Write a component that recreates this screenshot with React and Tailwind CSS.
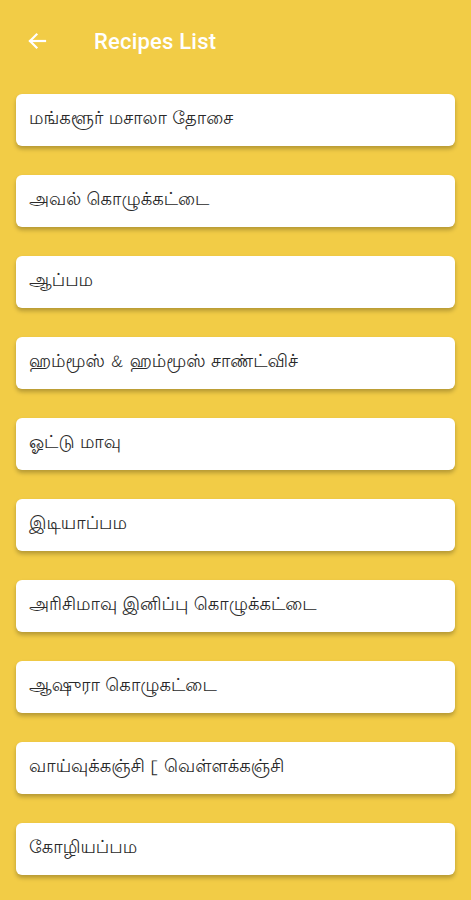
import React from 'react';

const recipes = [
  'மங்களூர் மசாலா தோசை',
  'அவல் கொழுக்கட்டை',
  'ஆப்பம',
  'ஹம்மூஸ் & ஹம்மூஸ் சாண்ட்விச்',
  'ஓட்டு மாவு',
  'இடியாப்பம',
  'அரிசிமாவு இனிப்பு கொழுக்கட்டை',
  'ஆஷுரா கொழுகட்டை',
  'வாய்வுக்கஞ்சி [ வெள்ளக்கஞ்சி',
  'கோழியப்பம',
];

function App() {
  return (
    <div className="min-h-[900px] w-[471px] bg-[#f2cc46] font-['Roboto','Noto_Sans',sans-serif] overflow-hidden">
      <div className="h-[82px] flex items-center">
        <button className="ml-[24px] w-[26px] h-[26px] flex items-center justify-center">
          <svg width="24" height="24" viewBox="0 0 24 24" fill="none" stroke="white" strokeWidth="2.2" strokeLinecap="square">
            <path d="M20 12H5" />
            <path d="M11.5 5.5L5 12l6.5 6.5" />
          </svg>
        </button>
        <h1 className="ml-[44px] text-white text-[22px] font-medium tracking-[0.2px]">Recipes List</h1>
      </div>
      <div className="flex flex-col gap-[29px] px-[16px] pt-[12px] pb-[30px]">
        {recipes.map((r, i) => (
          <div key={i} className="h-[52px] bg-white rounded-[6px] shadow-[0_3px_4px_rgba(0,0,0,0.25)] flex items-center px-[13px]">
            <span className="text-[18px] text-[#2a2a2a] font-['Lohit_Tamil','Noto_Sans_Tamil',sans-serif]">{r}</span>
          </div>
        ))}
      </div>
    </div>
  );
}

export default App;
